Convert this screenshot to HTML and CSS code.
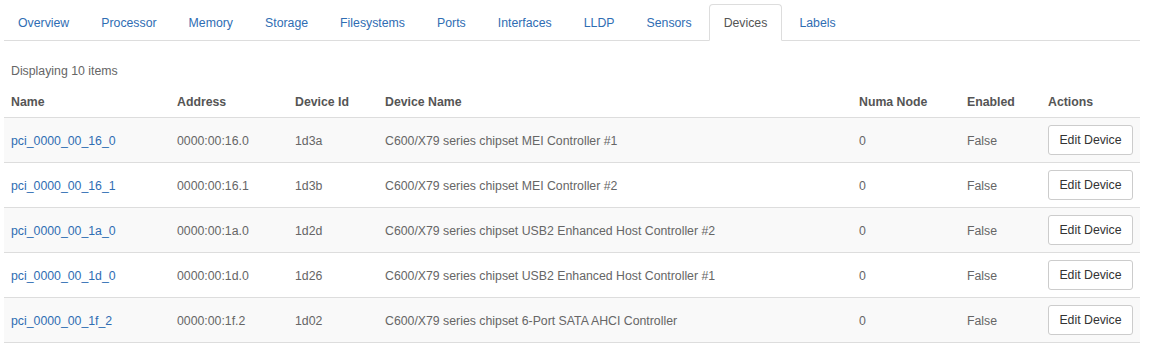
FILE: index.html
```html
<!DOCTYPE html>
<html>
<head>
<meta charset="utf-8">
<link rel="stylesheet" href="styles.css">
</head>
<body>
<div class="page">
  <ul class="tabs">
    <li class="tab"><a href="#">Overview</a></li>
    <li class="tab"><a href="#">Processor</a></li>
    <li class="tab"><a href="#">Memory</a></li>
    <li class="tab"><a href="#">Storage</a></li>
    <li class="tab"><a href="#">Filesystems</a></li>
    <li class="tab"><a href="#">Ports</a></li>
    <li class="tab"><a href="#">Interfaces</a></li>
    <li class="tab"><a href="#">LLDP</a></li>
    <li class="tab"><a href="#">Sensors</a></li>
    <li class="tab active"><a href="#">Devices</a></li>
    <li class="tab"><a href="#">Labels</a></li>
  </ul>
  <div class="count">Displaying 10 items</div>
  <table class="grid">
    <colgroup>
      <col class="c1"><col class="c2"><col class="c3"><col class="c4"><col class="c5"><col class="c6"><col class="c7">
    </colgroup>
    <thead>
      <tr><th>Name</th><th>Address</th><th>Device Id</th><th>Device Name</th><th>Numa Node</th><th>Enabled</th><th>Actions</th></tr>
    </thead>
    <tbody>
      <tr><td><a href="#">pci_0000_00_16_0</a></td><td>0000:00:16.0</td><td>1d3a</td><td>C600/X79 series chipset MEI Controller #1</td><td>0</td><td>False</td><td><button class="btn">Edit Device</button></td></tr>
      <tr><td><a href="#">pci_0000_00_16_1</a></td><td>0000:00:16.1</td><td>1d3b</td><td>C600/X79 series chipset MEI Controller #2</td><td>0</td><td>False</td><td><button class="btn">Edit Device</button></td></tr>
      <tr><td><a href="#">pci_0000_00_1a_0</a></td><td>0000:00:1a.0</td><td>1d2d</td><td>C600/X79 series chipset USB2 Enhanced Host Controller #2</td><td>0</td><td>False</td><td><button class="btn">Edit Device</button></td></tr>
      <tr><td><a href="#">pci_0000_00_1d_0</a></td><td>0000:00:1d.0</td><td>1d26</td><td>C600/X79 series chipset USB2 Enhanced Host Controller #1</td><td>0</td><td>False</td><td><button class="btn">Edit Device</button></td></tr>
      <tr><td><a href="#">pci_0000_00_1f_2</a></td><td>0000:00:1f.2</td><td>1d02</td><td>C600/X79 series chipset 6-Port SATA AHCI Controller</td><td>0</td><td>False</td><td><button class="btn">Edit Device</button></td></tr>
    </tbody>
  </table>
</div>
</body>
</html>
```
FILE: styles.css
```css
* { box-sizing: border-box; }
html, body { margin: 0; padding: 0; background: #fff; }
body {
  font-family: "Liberation Sans", Arial, Helvetica, sans-serif;
  font-size: 12.3px;
  color: #666;
}
a { color: #2f6db3; text-decoration: none; }
.page { padding: 4px 12px 0 4px; }
.tabs {
  list-style: none;
  margin: 0;
  padding: 0;
  display: flex;
  border-bottom: 1px solid #ddd;
}
.tab {
  margin: 0 2px -1px 0;
  border: 1px solid transparent;
  border-radius: 4px 4px 0 0;
}
.tab:first-child { margin-left: -1px; }
.tab a {
  display: block;
  padding: 9px 14px 7px;
  line-height: 19px;
  font-size: 12.3px;
}
.tab.active {
  border-color: #ddd #ddd transparent #ddd;
  background: #fff;
}
.tab.active a { color: #555; }
.count {
  margin-top: 21px;
  line-height: 18px;
  padding-left: 7px;
  color: #666;
}
.grid {
  margin-top: 5px;
  width: 100%;
  border-collapse: collapse;
  table-layout: fixed;
}
.c1 { width: 166px; }
.c2 { width: 118px; }
.c3 { width: 90px; }
.c4 { width: 474px; }
.c5 { width: 108px; }
.c6 { width: 81px; }
.c7 { width: 99px; }
.grid th {
  text-align: left;
  font-weight: bold;
  color: #555;
  padding: 9px 7px 7px;
  line-height: 16px;
  border-bottom: 1px solid #ddd;
}
.grid td {
  padding: 8px 7px 6px;
  line-height: 16px;
  height: 45px;
  vertical-align: middle;
  border-bottom: 1px solid #ddd;
  white-space: nowrap;
}
.grid td:last-child { padding-top: 7px; padding-bottom: 7px; }
.grid tbody tr:nth-child(odd) td { background: #f9f9f9; }
.btn {
  font-family: inherit;
  font-size: 12.3px;
  color: #333;
  background: #fff;
  border: 1px solid #ccc;
  border-radius: 3px;
  height: 30px;
  width: 85px;
  padding: 0;
  cursor: pointer;
}
```
